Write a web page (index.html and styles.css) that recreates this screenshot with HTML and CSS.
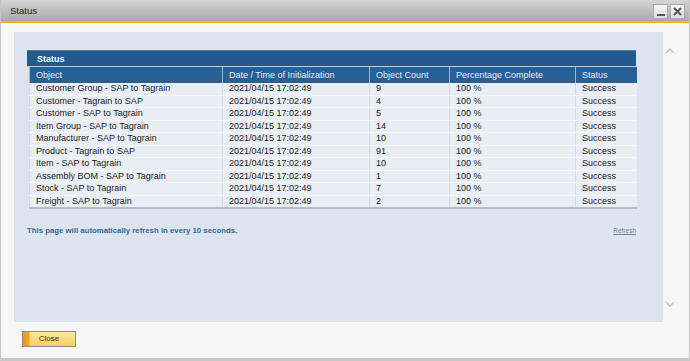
FILE: index.html
```html
<!DOCTYPE html>
<html lang="en">
<head>
  <meta charset="UTF-8">
  <title>Status</title>
  <link rel="stylesheet" href="styles.css">
</head>
<body>
  <div class="window">
    <div class="titlebar">
      <span class="title">Status</span>
      <div class="winbtns">
        <span class="winbtn"><span class="minline"></span></span>
        <span class="winbtn">
          <svg width="9" height="9" viewBox="0 0 9 9"><path d="M1 1L8 8M8 1L1 8" stroke="#555" stroke-width="2"/></svg>
        </span>
      </div>
    </div>

    <div class="content">
      <div class="main">
        <div class="panel">
          <div class="boxhead">Status</div>
          <table class="grid">
            <colgroup>
              <col style="width:193px">
              <col style="width:147px">
              <col style="width:80px">
              <col style="width:126px">
              <col style="width:61px">
            </colgroup>
            <thead>
              <tr>
                <th>Object</th>
                <th>Date / Time of Initialization</th>
                <th>Object Count</th>
                <th>Percentage Complete</th>
                <th>Status</th>
              </tr>
            </thead>
            <tbody>
              <tr><td>Customer Group - SAP to Tagrain</td><td>2021/04/15 17:02:49</td><td>9</td><td>100 %</td><td>Success</td></tr>
              <tr><td>Customer - Tagrain to SAP</td><td>2021/04/15 17:02:49</td><td>4</td><td>100 %</td><td>Success</td></tr>
              <tr><td>Customer - SAP to Tagrain</td><td>2021/04/15 17:02:49</td><td>5</td><td>100 %</td><td>Success</td></tr>
              <tr><td>Item Group - SAP to Tagrain</td><td>2021/04/15 17:02:49</td><td>14</td><td>100 %</td><td>Success</td></tr>
              <tr><td>Manufacturer - SAP to Tagrain</td><td>2021/04/15 17:02:49</td><td>10</td><td>100 %</td><td>Success</td></tr>
              <tr><td>Product - Tagrain to SAP</td><td>2021/04/15 17:02:49</td><td>91</td><td>100 %</td><td>Success</td></tr>
              <tr><td>Item - SAP to Tagrain</td><td>2021/04/15 17:02:49</td><td>10</td><td>100 %</td><td>Success</td></tr>
              <tr><td>Assembly BOM - SAP to Tagrain</td><td>2021/04/15 17:02:49</td><td>1</td><td>100 %</td><td>Success</td></tr>
              <tr><td>Stock - SAP to Tagrain</td><td>2021/04/15 17:02:49</td><td>7</td><td>100 %</td><td>Success</td></tr>
              <tr><td>Freight - SAP to Tagrain</td><td>2021/04/15 17:02:49</td><td>2</td><td>100 %</td><td>Success</td></tr>
            </tbody>
          </table>
          <div class="note">
            <span class="notetext">This page will automatically refresh in every 10 seconds.</span>
            <a class="refresh" href="#">Refresh</a>
          </div>
        </div>
        <div class="scroll">
          <svg width="10" height="6" viewBox="0 0 10 6"><path d="M1 5L5 1L9 5" fill="none" stroke="#c4c4c4" stroke-width="1.5"/></svg>
          <svg width="10" height="6" viewBox="0 0 10 6"><path d="M1 1L5 5L9 1" fill="none" stroke="#c4c4c4" stroke-width="1.5"/></svg>
        </div>
      </div>
      <div class="footer">
        <button class="closebtn">Close</button>
      </div>
    </div>
  </div>
</body>
</html>
```

FILE: styles.css
```css
body {
  margin: 0;
  font-family: "Liberation Sans", Arial, sans-serif;
  background: #f6f6f6;
}
.window {
  box-sizing: border-box;
  width: 690px;
  height: 361px;
  border: 1px solid #c4c4c4;
  border-bottom: 3px solid #c8c8c8;
  border-top: none;
  display: flex;
  flex-direction: column;
  background: #f6f6f6;
}
.titlebar {
  height: 21px;
  background: linear-gradient(#d6d6d6, #a9a9a9);
  border-bottom: 2px solid #f2b600;
  display: flex;
  align-items: center;
  justify-content: space-between;
  padding: 0 4px 0 9px;
}
.title {
  font-size: 9.5px;
  color: #1e1e1e;
}
.winbtns {
  display: flex;
  gap: 2px;
  margin-top: 1px;
}
.winbtn {
  box-sizing: border-box;
  width: 15px;
  height: 15px;
  border: 1px solid #a8a8a8;
  background: linear-gradient(#f6f6f6, #dcdcdc);
  display: flex;
  align-items: center;
  justify-content: center;
}
.minline {
  width: 8px;
  height: 2px;
  background: #555;
  margin-top: 7px;
}
.content {
  flex: 1;
  display: flex;
  flex-direction: column;
  padding: 9px 0 0 13px;
}
.main {
  display: flex;
}
.panel {
  box-sizing: border-box;
  width: 649px;
  height: 290px;
  background: #dde4ee;
  padding: 18px 27px 0 13px;
}
.boxhead {
  height: 17px;
  line-height: 17px;
  background: #225a8d;
  border-top: 1px solid #4d7eab;
  box-sizing: border-box;
  border-bottom: 1px solid #b9cbe0;
  color: #fff;
  font-weight: bold;
  font-size: 9px;
  padding-left: 10px;
}
.grid {
  margin-left: 2px;
  width: 607px;
  table-layout: fixed;
  border-collapse: collapse;
  font-size: 9px;
  border-bottom: 2px solid #b6bdc7;
}
.grid th {
  background: #2a5f94;
  color: #e4ecf6;
  font-weight: normal;
  text-align: left;
  line-height: 16px;
  padding: 0 6px;
  border-left: 1px solid #9fb6cf;
}
.grid td {
  background: #e9eef5;
  color: #1c1c1c;
  line-height: 11.5px;
  padding: 0 5px 0 6px;
  border-bottom: 1px solid #f5f7fa;
  border-left: 1px solid #d3dbe6;
  white-space: nowrap;
}
.note {
  display: flex;
  justify-content: space-between;
  align-items: center;
  margin-top: 17px;
}
.notetext {
  font-size: 7.8px;
  font-weight: bold;
  color: #2d6b9f;
}
.refresh {
  font-size: 6.5px;
  color: #6a86a6;
}
.scroll {
  width: 25px;
  height: 290px;
  display: flex;
  flex-direction: column;
  justify-content: space-between;
  padding: 16px 0 15px 2px;
  box-sizing: border-box;
}
.footer {
  padding: 5px 0 0 8px;
}
.closebtn {
  box-sizing: border-box;
  width: 54px;
  height: 16px;
  border: 1px solid #8e8e8e;
  background: linear-gradient(90deg, #f0930f 0, #f4a72a 6px, transparent 7px), linear-gradient(#fbe7a4, #f5cf62);
  font-family: "Liberation Sans", Arial, sans-serif;
  font-size: 8px;
  color: #333;
  padding: 0;
  cursor: pointer;
}
```
